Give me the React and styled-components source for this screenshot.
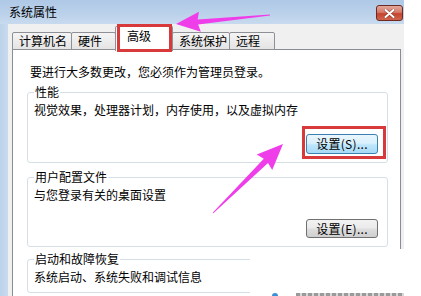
import React from "react";
import styled, { createGlobalStyle } from "styled-components";

const GlobalStyle = createGlobalStyle`
  html, body {
    margin: 0;
    padding: 0;
    background: #ffffff;
  }
  body {
    font-family: "Noto Sans CJK SC", "Liberation Sans", sans-serif;
    font-size: 12px;
    color: #000;
  }
`;

const Page = styled.div`
  position: relative;
  width: 421px;
  height: 296px;
  overflow: hidden;
  background: #ffffff;
`;

const Window = styled.div`
  width: 404px;
  height: 296px;
  display: flex;
  flex-direction: column;
  background: #f0f0f0;
`;

const TitleBar = styled.div`
  height: 24px;
  flex-shrink: 0;
  display: flex;
  justify-content: space-between;
  align-items: flex-start;
  padding-left: 9px;
  background: linear-gradient(180deg, #aec8e6 0%, #bcd2eb 60%, #c8daee 100%);
`;

const Title = styled.span`
  margin-top: 5px;
  line-height: 14px;
`;

const CloseButton = styled.div`
  width: 27px;
  height: 16px;
  margin-top: 5px;
  margin-right: 1px;
  box-sizing: border-box;
  border: 1px solid #6b2a23;
  border-radius: 3px;
  background: linear-gradient(180deg, #e2a79b 0%, #d67a68 45%, #c4442d 55%, #d0644c 100%);
  display: flex;
  align-items: center;
  justify-content: center;
`;

const Body = styled.div`
  flex: 1;
  display: flex;
  min-height: 0;
`;

const FrameEdge = styled.div`
  width: 8px;
  flex-shrink: 0;
  background: linear-gradient(90deg, #bcd2ea, #c9dbee);
`;

const Main = styled.div`
  flex: 1;
  display: flex;
  flex-direction: column;
  padding: 0 3px 0 4px;
  min-width: 0;
`;

const TabRow = styled.div`
  height: 26px;
  flex-shrink: 0;
  display: flex;
  align-items: flex-end;
`;

const Tab = styled.div`
  position: relative;
  box-sizing: border-box;
  width: ${(p) => p.$w}px;
  height: ${(p) => (p.$active ? 25 : 18)}px;
  margin-right: -1px;
  margin-bottom: ${(p) => (p.$active ? -1 : 0)}px;
  padding-left: ${(p) => (p.$active ? 11 : 6)}px;
  padding-top: ${(p) => (p.$active ? 2 : 1)}px;
  line-height: 14px;
  border: 1px solid #8e9096;
  border-bottom: ${(p) => (p.$active ? "none" : "1px solid #8e9096")};
  border-radius: 2px 2px 0 0;
  background: ${(p) =>
    p.$active ? "#ffffff" : "linear-gradient(180deg, #f4f4f4, #e4e4e4)"};
  z-index: ${(p) => (p.$active ? 2 : 1)};
  white-space: nowrap;
`;

const Panel = styled.div`
  flex: 1;
  margin-top: -1px;
  box-sizing: border-box;
  background: #ffffff;
  border: 1px solid #898c95;
  border-bottom: none;
  padding: 15px 12px 0 14px;
  display: flex;
  flex-direction: column;
`;

const Intro = styled.div`
  line-height: 14px;
  padding-left: 3px;
  white-space: nowrap;
`;

const Group = styled.fieldset`
  margin: ${(p) => p.$gap}px 0 0 0;
  padding: 0 9px 8px 6px;
  border: 1px solid #d5dfe5;
  border-radius: 3px;
  min-width: 0;
`;

const Legend = styled.legend`
  padding: 0 1px;
  line-height: 14px;
`;

const GroupText = styled.div`
  margin-top: 4px;
  line-height: 14px;
  white-space: nowrap;
`;

const ButtonRow = styled.div`
  display: flex;
  justify-content: flex-end;
  margin-top: 17px;
`;

const Button = styled.div`
  box-sizing: border-box;
  width: 72px;
  height: ${(p) => p.$h}px;
  display: flex;
  align-items: center;
  justify-content: center;
  border-radius: 3px;
  border: 1px solid ${(p) => (p.$hot ? "#3c7fb1" : "#707070")};
  background: ${(p) =>
    p.$hot
      ? "linear-gradient(180deg, #eaf6fd 0%, #d9f0fc 45%, #bee6fd 55%, #a7d9f5 100%)"
      : "linear-gradient(180deg, #f2f2f2 0%, #ebebeb 45%, #dddddd 55%, #cfcfcf 100%)"};
  line-height: 14px;
  letter-spacing: 0.3px;
`;

const Highlight = styled.div`
  position: absolute;
  z-index: 5;
  top: ${(p) => p.$t}px;
  left: ${(p) => p.$l}px;
  width: ${(p) => p.$w}px;
  height: ${(p) => p.$h}px;
  box-sizing: border-box;
  border: 3px solid #d83a3b;
  pointer-events: none;
`;

const Arrows = styled.svg`
  position: absolute;
  z-index: 6;
  top: 0;
  left: 0;
  pointer-events: none;
`;

const Patch = styled.div`
  position: absolute;
  z-index: 4;
  left: 250px;
  top: 249px;
  width: 171px;
  height: 47px;
  background: #ffffff;
`;

const Watermark = styled.div`
  position: absolute;
  z-index: 4;
  left: 272px;
  top: 293px;
  display: flex;
  align-items: flex-start;
  gap: 18px;
`;

const Dot = styled.span`
  width: 6px;
  height: 5px;
  border-radius: 3px 3px 0 0;
  background: #3b8fd6;
`;

const Smudge = styled.span`
  width: 108px;
  height: 3px;
  background: repeating-linear-gradient(90deg, #9a9a9a 0 4px, #d8d8d8 4px 6px);
  filter: blur(0.4px);
`;

function arrowPoints(L, h, w, s, t) {
  return [
    [0, -t / 2],
    [L - h, -s / 2],
    [L - h - 2, -w],
    [L, 0],
    [L - h - 2, w],
    [L - h, s / 2],
    [0, t / 2],
  ]
    .map((p) => p.join(","))
    .join(" ");
}

function Arrow({ from, to, head, half, shaft }) {
  const dx = to[0] - from[0];
  const dy = to[1] - from[1];
  const L = Math.hypot(dx, dy);
  const angle = (Math.atan2(dy, dx) * 180) / Math.PI;
  return (
    <polygon
      points={arrowPoints(L, head, half, shaft, 1)}
      transform={`translate(${from[0]} ${from[1]}) rotate(${angle})`}
      fill="#ef3de9"
    />
  );
}

const tabs = [
  { label: "计算机名", w: 60 },
  { label: "硬件", w: 45 },
  { label: "高级", w: 58, active: true },
  { label: "系统保护", w: 58 },
  { label: "远程", w: 46 },
];

export default function App() {
  return (
    <Page>
      <GlobalStyle />
      <Window>
        <TitleBar>
          <Title>系统属性</Title>
          <CloseButton>
            <svg width="11" height="9" viewBox="0 0 11 9">
              <path
                d="M1.5 1 L9.5 8 M9.5 1 L1.5 8"
                stroke="#5a1f18"
                strokeWidth="3.2"
                strokeLinecap="round"
                opacity="0.5"
              />
              <path
                d="M1.5 1 L9.5 8 M9.5 1 L1.5 8"
                stroke="#ffffff"
                strokeWidth="2"
                strokeLinecap="round"
              />
            </svg>
          </CloseButton>
        </TitleBar>
        <Body>
          <FrameEdge />
          <Main>
            <TabRow>
              {tabs.map((t) => (
                <Tab key={t.label} $w={t.w} $active={t.active}>
                  {t.label}
                </Tab>
              ))}
            </TabRow>
            <Panel>
              <Intro>要进行大多数更改，您必须作为管理员登录。</Intro>
              <Group $gap={6}>
                <Legend>性能</Legend>
                <GroupText>视觉效果，处理器计划，内存使用，以及虚拟内存</GroupText>
                <ButtonRow>
                  <Button $hot $h={20}>设置(S)...</Button>
                </ButtonRow>
              </Group>
              <Group $gap={7}>
                <Legend>用户配置文件</Legend>
                <GroupText>与您登录有关的桌面设置</GroupText>
                <ButtonRow>
                  <Button $h={19}>设置(E)...</Button>
                </ButtonRow>
              </Group>
              <Group $gap={5}>
                <Legend>启动和故障恢复</Legend>
                <GroupText>系统启动、系统失败和调试信息</GroupText>
              </Group>
            </Panel>
          </Main>
        </Body>
      </Window>

      <Highlight $t={24} $l={117} $w={55} $h={28} />
      <Highlight $t={126} $l={302} $w={84} $h={33} />

      <Patch />
      <Watermark>
        <Dot />
        <Smudge />
      </Watermark>

      <Arrows width="421" height="296" viewBox="0 0 421 296">
        <Arrow from={[270, 15]} to={[176, 24]} head={22} half={10} shaft={5} />
        <Arrow from={[213, 213]} to={[283, 144]} head={24} half={11} shaft={6} />
      </Arrows>
    </Page>
  );
}
